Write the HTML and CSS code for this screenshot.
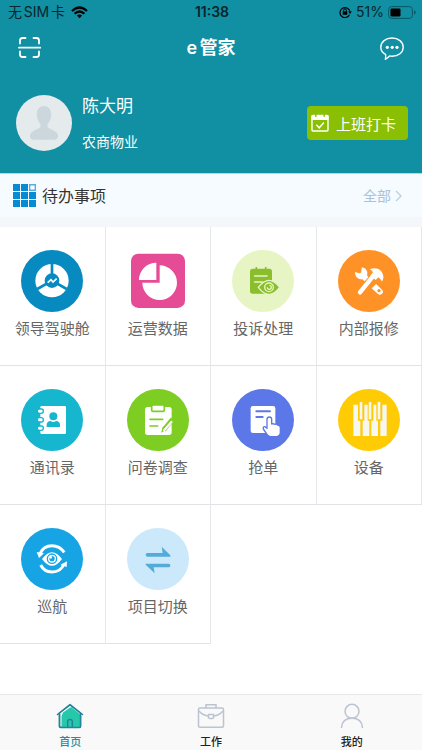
FILE: index.html
```html
<!DOCTYPE html>
<html lang="zh-CN">
<head>
<meta charset="utf-8">
<meta name="viewport" content="width=device-width, initial-scale=1">
<title>e管家</title>
<link rel="stylesheet" href="styles.css">
</head>
<body>
<div class="app">
  <header class="top">
    <div class="status">
      <div class="status-side">
        <span>无SIM卡</span>
        <svg width="17" height="13" viewBox="0 0 17 13" fill="none" stroke="#000" stroke-width="2.2" aria-hidden="true"><path d="M1 5Q8.500-2 16 5M3.600 7.700Q8.500 3.300 13.400 7.700"/><path d="M8.500 12.200 5.900 9.500Q8.500 7.500 11.100 9.500Z" fill="#000" stroke="none"/></svg>
      </div>
      <strong class="status-time">11:38</strong>
      <div class="status-side status-end">
        <svg width="13" height="12" viewBox="0 0 13 12" fill="none" stroke="#000" stroke-width="1.200" aria-hidden="true"><path d="M10.500 8.800A5 5 0 1 1 11 6"/><path d="M9.200 5.500h3.600L11 8Z" fill="#000" stroke="none"/><rect x="3.700" y="5.300" width="4.600" height="3.400" rx=".5" fill="#000" stroke="none"/><path d="M4.600 5.500V4.300a1.400 1.400 0 0 1 2.800 0v1.200" stroke-width="1"/></svg>
        <span>51%</span>
        <svg width="28" height="13" viewBox="0 0 28 13" aria-hidden="true"><rect x=".6" y=".6" width="23.800" height="11.800" rx="3" fill="none" stroke="#0a5966"/><rect x="2.500" y="2.500" width="10" height="8" rx="1.300"/><path d="M26 4.300q1.700.6 1.700 2.200T26 8.700Z" fill="#0a5966"/></svg>
      </div>
    </div>
    <div class="titlebar">
      <button class="icon-button" type="button" aria-label="扫一扫">
        <svg width="24" height="24" viewBox="0 0 24 24" fill="none" stroke="#fff" stroke-width="1.800" stroke-linecap="round"><path d="M2 7.500V4.500Q2 2 4.500 2H7.500M15.500 2h3Q21 2 21 4.500V7.500M21 15.500v3Q21 21 18.500 21H15.500M7.500 21H4.500Q2 21 2 18.500V15.500M1 11.700H22.200"/></svg>
      </button>
      <h1>e管家</h1>
      <button class="icon-button" type="button" aria-label="消息">
        <svg width="24" height="24" viewBox="0 0 24 24" fill="none" stroke="#fff" stroke-width="1.400" stroke-linejoin="round"><path d="M5.500 18.400C2.500 16.700.8 14.200.8 11.200.8 5.900 5.700 2 12 2s11.200 3.900 11.200 9.200S18.300 20.200 12 20.200q-1.200 0-2.400-.3Q8 22.200 5.300 23.300Q6 20.500 5.500 18.400Z"/><g fill="#fff" stroke="none"><circle cx="7.300" cy="11.300" r="1.600"/><circle cx="12.200" cy="11.300" r="1.600"/><circle cx="17" cy="11.300" r="1.600"/></g></svg>
      </button>
    </div>
    <div class="profile">
      <svg class="avatar" viewBox="0 0 56 56" aria-hidden="true"><circle cx="28" cy="28" r="28" fill="#e5eaed"/><path d="M28 11c5 0 7.300 4 7.200 9-.1 4-1.800 7-3.700 9v3c1 2 10.500 3.500 10.500 9 0 3-2 3.700-4 3.700H18c-2 0-4-.7-4-3.700 0-5.500 9.500-7 10.500-9v-3c-1.900-2-3.600-5-3.700-9-.1-5 2.200-9 7.200-9Z" fill="#ccd7dd"/></svg>
      <div class="person">
        <p class="name">陈大明</p>
        <p class="company">农商物业</p>
      </div>
      <button class="punch" type="button">
        <svg width="18" height="18" viewBox="0 0 18 18" aria-hidden="true"><path d="M2 1.500H16Q17 1.500 17 2.500V16Q17 17 16 17H2Q1 17 1 16V2.500Q1 1.500 2 1.500Z" fill="none" stroke="#fff" stroke-width="1.400"/><path d="M.5 1.500h17V6H.5Z" fill="#fff"/><path d="M4.800 0V2.800M13.200 0V2.800" stroke="#8abf03" stroke-width="1.500"/><path d="m5.300 10.800 2.900 3 4.700-5.300" fill="none" stroke="#fff" stroke-width="1.500"/></svg>
        <span>上班打卡</span>
      </button>
    </div>
  </header>

  <main>
    <section class="todo">
      <svg width="23" height="23" viewBox="0 0 23 23" fill="#078bd2" aria-hidden="true"><path d="M0 0h7v7H0ZM8 0h7v7H8ZM0 8h7v7H0ZM8 8h7v7H8ZM16 8h7v7h-7ZM0 16h7v7H0ZM8 16h7v7H8ZM16 16h7v7h-7Z"/><path d="M16.700.7h5.600v5.600h-5.600Z" fill="#fff" stroke="#55aee0" stroke-width="1.400"/></svg>
      <h2>待办事项</h2>
      <a class="all" href="#all">全部
        <svg width="7" height="12" viewBox="0 0 7 12" fill="none" stroke="#b9cfe2" stroke-width="1.300" aria-hidden="true"><path d="m1 1 5 5-5 5"/></svg>
      </a>
    </section>

    <nav class="grid" aria-label="功能">
      <a class="tile" href="#cockpit">
        <svg viewBox="0 0 186 186" aria-hidden="true"><circle cx="93" cy="93" r="93" fill="#078ac0"/><circle cx="93" cy="92" r="50" fill="#fff"/><path d="M93 92V40M93 92 49 117M93 92l44 25" stroke="#078ac0" stroke-width="8"/><circle cx="93" cy="92" r="22" fill="#078ac0"/><path d="m80 98 10-9 6 7 11-10" fill="none" stroke="#fff" stroke-width="5"/></svg>
        <span>领导驾驶舱</span>
      </a>
      <a class="tile" href="#data">
        <svg viewBox="0 0 186 186" aria-hidden="true"><rect x="12" y="11" width="162" height="163" rx="22" fill="#e64c95"/><path d="M98 46a52 52 0 1 1-52 52H98ZM88 38V90H36A52 52 0 0 1 88 38Z" fill="#fff"/></svg>
        <span>运营数据</span>
      </a>
      <a class="tile" href="#complaint">
        <svg viewBox="0 0 186 186" aria-hidden="true"><circle cx="93" cy="93" r="93" fill="#e7f5c5"/><rect x="54" y="56" width="66" height="75" rx="8" fill="#8bbe2d"/><path d="M73 51v10M101 51v10" stroke="#8bbe2d" stroke-width="5"/><path d="M68 78h37M68 96h23" stroke="#e7f5c5" stroke-width="5" stroke-linecap="round"/><path d="M79 112Q111 70 143 112 111 154 79 112Z" fill="#8bbe2d" stroke="#e7f5c5" stroke-width="4"/><circle cx="111" cy="112" r="13" fill="none" stroke="#e7f5c5" stroke-width="4"/><path d="M106 112a6 6 0 1 0 6-6" fill="none" stroke="#e7f5c5" stroke-width="4"/></svg>
        <span>投诉处理</span>
      </a>
      <a class="tile" href="#repair">
        <svg viewBox="0 0 186 186" aria-hidden="true"><circle cx="93" cy="93" r="93" fill="#ff9226"/><path d="M72 52C69 60 72 68 67 69 62 71 58 66 51 67 51 79 59 89 73 88L80 94 91 82 87 76C91 65 84 54 72 52Z" fill="#fff"/><path d="m101 115 13-13 18 17q6 6 0 12t-12 1Z" fill="#fff"/><circle cx="123" cy="122" r="5" fill="#ff9226"/><path d="m66 127 38-47" stroke="#fff" stroke-width="13" stroke-linecap="round"/><path d="M95 58Q109 51 123 58 137 68 136 85L132 95Q129 87 121 82L113 90 97 77 105 67Q101 60 95 58Z" fill="#fff"/></svg>
        <span>内部报修</span>
      </a>
      <a class="tile" href="#contacts">
        <svg viewBox="0 0 186 186" aria-hidden="true"><circle cx="93" cy="93" r="93" fill="#16b6cf"/><rect x="58" y="51" width="77" height="84" rx="4" fill="#fff"/><g fill="#fff" stroke="#16b6cf" stroke-width="4"><rect x="49" y="60" width="18" height="13" rx="6"/><rect x="49" y="86" width="18" height="13" rx="6"/><rect x="49" y="111" width="18" height="13" rx="6"/></g><circle cx="97" cy="82" r="12" fill="#16b6cf"/><path d="M77 114v-6q0-11 12-12 8 6 16 0 12 1 12 12v6Z" fill="#16b6cf"/></svg>
        <span>通讯录</span>
      </a>
      <a class="tile" href="#survey">
        <svg viewBox="0 0 186 186" aria-hidden="true"><circle cx="93" cy="93" r="93" fill="#7dcd22"/><rect x="54" y="54" width="80" height="84" rx="8" fill="#fff"/><path d="M74 52q0-4 5-4h28q5 0 5 4v10q0 5-5 5H79q-5 0-5-5Z" fill="#fff" stroke="#7dcd22" stroke-width="5"/><path d="M69 91h38M69 111h23" stroke="#7dcd22" stroke-width="5" stroke-linecap="round"/><path d="m137 90-27 33" stroke="#7dcd22" stroke-width="14"/><path d="m109 112-7 19 17-9Z" fill="#7dcd22"/><path d="m135 97-22 25" stroke="#fff" stroke-width="7"/><path d="m110 119 6 6-8 2Z" fill="#fff"/></svg>
        <span>问卷调查</span>
      </a>
      <a class="tile" href="#orders">
        <svg viewBox="0 0 186 186" aria-hidden="true"><circle cx="93" cy="93" r="93" fill="#5b77e8"/><rect x="56" y="51" width="74" height="81" rx="7" fill="#fff"/><path d="M73 67h41M73 84h19" stroke="#5b77e8" stroke-width="6" stroke-linecap="round"/><path d="M105 118V91q0-7 7-7t7 7v14q5-2 9 1 6-2 9 2 8 0 8 8v14q0 12-11 13h-19q-7-1-10-7l-11-16q-2-8 5-7Z" fill="#fff" stroke="#5b77e8" stroke-width="4" stroke-linejoin="round"/></svg>
        <span>抢单</span>
      </a>
      <a class="tile" href="#devices">
        <svg viewBox="0 0 186 186" aria-hidden="true"><circle cx="93" cy="93" r="93" fill="#ffcb05"/><path d="M46 47h14v48h7v46H46ZM79 47h10v48h5v46H74V95h5ZM106 47h9v48h5v46h-20V95h6ZM133 47h13v94h-19V95h6Z" fill="#f7f7f2"/><path d="M65 39h8v52h-8ZM92 39h8v52h-8ZM119 39h8v52h-8Z" fill="#f7f7f2"/></svg>
        <span>设备</span>
      </a>
      <a class="tile" href="#patrol">
        <svg viewBox="0 0 186 186" aria-hidden="true"><circle cx="93" cy="93" r="93" fill="#17a4e5"/><path d="M57 77Q67 53 93 53q23 0 37 20M129 108q-10 24-36 24-23 0-34-21" fill="none" stroke="#fff" stroke-width="9"/><path d="m47 72 22 4-15 14ZM138 100l-20 11 19 6Z" fill="#fff"/><path d="M63 93Q93 52 123 93 93 134 63 93Z" fill="#fff"/><circle cx="93" cy="92" r="14" fill="none" stroke="#17a4e5" stroke-width="4"/><circle cx="93" cy="92" r="8" fill="#17a4e5"/><circle cx="89" cy="88" r="4" fill="#fff"/></svg>
        <span>巡航</span>
      </a>
      <a class="tile" href="#switch">
        <svg viewBox="0 0 186 186" aria-hidden="true"><circle cx="93" cy="93" r="93" fill="#cbe9fa"/><path d="M61 75h46l-3-19 26 26v4H61q-5 0-5-5.500T61 75ZM125 118H80l3 18-27-26v-3h69q5 0 5 5.500t-5 5.500Z" fill="#54abd9"/></svg>
        <span>项目切换</span>
      </a>
    </nav>
  </main>

  <nav class="tabs" aria-label="主导航">
    <a class="tab active" href="#home" aria-current="page">
      <svg width="28" height="26" viewBox="0 0 28 26" fill="none" stroke="#23859a" stroke-width="1.500" stroke-linejoin="round" stroke-linecap="round" aria-hidden="true"><path d="M3.500 10 14 2l10.500 8v13.500q0 .8-.8.800H4.300q-.8 0-.8-.8Z" fill="#fff"/><path d="M7 9.500 15 4l9 7v13H5.500V13Z" fill="#25c9aa" stroke="none"/><path d="M1.500 11.500 14 1.500l12.500 10M3.500 10.500v12.700q0 1.200 1.200 1.200h18.600q1.200 0 1.200-1.200V10.500M11.700 24V18.500q0-2 2.300-2t2.300 2V24"/></svg>
      <span>首页</span>
    </a>
    <a class="tab" href="#work">
      <svg width="28" height="26" viewBox="0 0 28 26" fill="none" stroke="#bcc4d1" stroke-width="1.500" aria-hidden="true"><rect x="1.500" y="5" width="25" height="19.300" rx="1.500"/><path d="M9 5V1.700h10V5M2 8q4 4.500 9.500 5M26 8q-4 4.500-9.500 5M11.500 11.500h5v3.300q-2.500 1.500-5 0Z"/></svg>
      <span>工作</span>
    </a>
    <a class="tab" href="#me">
      <svg width="28" height="26" viewBox="0 0 28 26" fill="none" stroke="#bcc4d1" stroke-width="1.500" stroke-linecap="round" aria-hidden="true"><circle cx="14" cy="8.300" r="7"/><path d="M3.500 24.500c.5-6 4.500-9.200 10.500-9.200s10 3.200 10.500 9.200"/></svg>
      <span>我的</span>
    </a>
  </nav>
</div>
</body>
</html>
```
FILE: styles.css
```css
* {
  box-sizing: border-box;
}

body,
h1,
h2,
p {
  margin: 0;
}

body {
  background: #fff;
  color: #333;
  font-family: Inter, "Noto Sans CJK SC", sans-serif;
  text-autospace: normal;
}

a {
  color: inherit;
  text-decoration: none;
}

button {
  border: 0;
  font: inherit;
  color: #fff;
  cursor: pointer;
}

svg {
  display: block;
  flex-shrink: 0;
}

.app {
  display: flex;
  flex-direction: column;
  min-height: 100vh;
}

.top {
  background: #118fa3;
  color: #fff;
}

.status {
  display: grid;
  grid-template-columns: 1fr auto 1fr;
  align-items: center;
  height: 24px;
  padding: 0 6px 0 8px;
  color: #06262b;
  font-size: 14px;
  line-height: 24px;
}

.status-side {
  display: flex;
  align-items: center;
  gap: 6px;
}

.status-end {
  justify-content: flex-end;
  gap: 4px;
}

.status-time {
  font-weight: 600;
}

.titlebar {
  display: flex;
  align-items: center;
  justify-content: space-between;
  height: 48px;
  padding: 0 18px;
}

.titlebar h1 {
  font-size: 18px;
  font-weight: 600;
  line-height: 24px;
}

.icon-button {
  padding: 0;
  background: none;
}

.profile {
  display: flex;
  align-items: center;
  gap: 10px;
  padding: 22px 14px 21px 16px;
}

.avatar {
  width: 56px;
  height: 56px;
}

.person {
  flex: 1;
}

.name {
  margin-bottom: 14px;
  font-size: 17px;
  line-height: 24px;
}

.company {
  font-size: 14px;
  line-height: 20px;
}

.profile .punch {
  display: flex;
  align-items: center;
  gap: 7px;
  height: 34px;
  padding: 0 12px 0 4px;
  border-radius: 4px;
  background: #8abf03;
  font-size: 15px;
}

.todo {
  display: flex;
  align-items: center;
  gap: 6px;
  height: 44px;
  padding: 0 20px 0 13px;
  border-top: 1px solid #a9dce8;
  background: #f5fbff;
}

.todo h2 {
  flex: 1;
  font-size: 16px;
  font-weight: 400;
  line-height: 24px;
}

.all {
  display: flex;
  align-items: center;
  gap: 4px;
  color: #a9c1da;
  font-size: 14px;
  line-height: 20px;
}

main {
  flex: 1;
}

.grid {
  display: grid;
  grid-template-columns: repeat(4, 1fr);
  border-top: 10px solid #f5f6fa;
}

.tile {
  display: flex;
  flex-direction: column;
  align-items: center;
  gap: 5px;
  padding: 23px 0 24px;
  border-right: 1px solid #e6e7ea;
  border-bottom: 1px solid #e2e3e6;
  color: #666;
  font-size: 15px;
  line-height: 24px;
}

.tile svg {
  width: 62px;
  height: 62px;
}

.tabs {
  display: grid;
  grid-template-columns: repeat(3, 1fr);
  border-top: 1px solid #e8e8ea;
  background: #f9f9f9;
}

.tab {
  display: flex;
  flex-direction: column;
  align-items: center;
  gap: 5px;
  padding: 8px 0 0;
  color: #222;
  font-size: 11px;
  font-weight: 500;
  line-height: 16px;
}

.tab.active {
  color: #1f8fa5;
}
```
